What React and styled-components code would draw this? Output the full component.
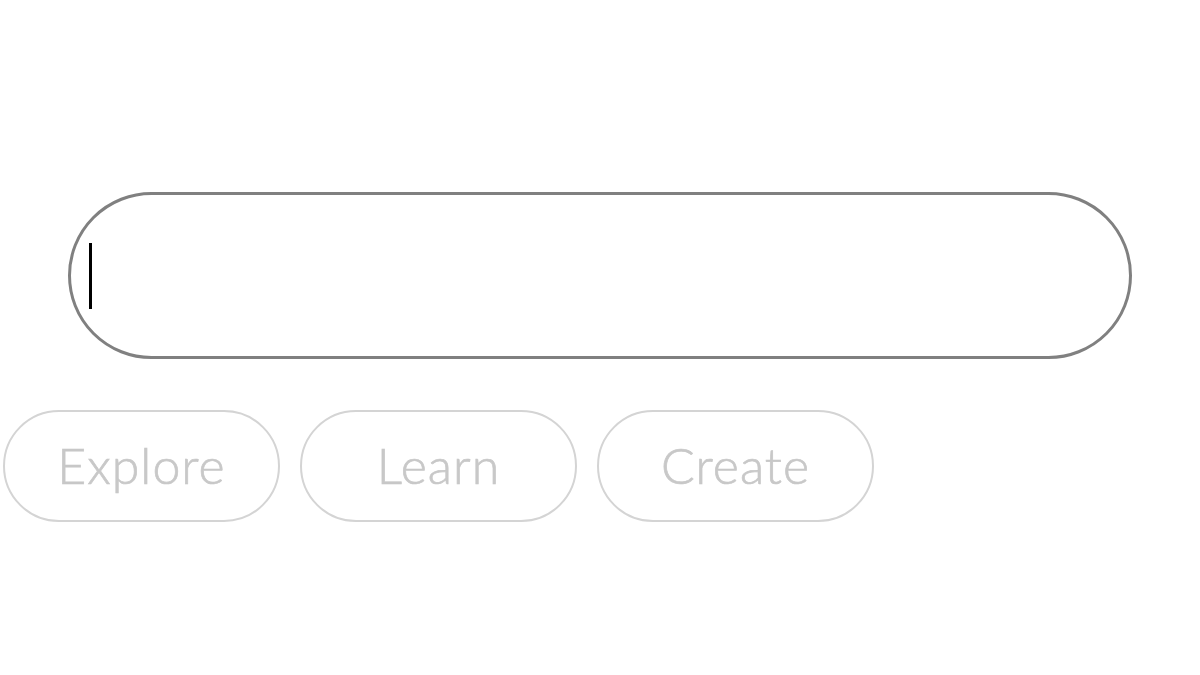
import React from "react";
import styled, { createGlobalStyle } from "styled-components";

const Global = createGlobalStyle`
  html, body { margin: 0; padding: 0; background: #ffffff; }
  body { font-family: Lato, "Open Sans", sans-serif; }
`;

const Page = styled.div`
  width: 1200px;
  height: 675px;
  display: flex;
  flex-direction: column;
  padding-top: 192px;
  box-sizing: border-box;
`;

const SearchBox = styled.div`
  margin: 0 68px;
  height: 167px;
  box-sizing: border-box;
  border: 3px solid #808080;
  border-radius: 84px;
  display: flex;
  align-items: center;
  padding-left: 18px;
`;

const Caret = styled.span`
  display: block;
  width: 3px;
  height: 66px;
  background: #000;
`;

const Chips = styled.div`
  display: flex;
  gap: 20px;
  margin-top: 51px;
  padding-left: 3px;
`;

const Chip = styled.div`
  width: 277px;
  height: 112px;
  box-sizing: border-box;
  border: 2.5px solid #d4d4d4;
  border-radius: 56px;
  display: flex;
  align-items: center;
  justify-content: center;
  font-family: Lato, sans-serif;
  font-weight: 300;
  font-size: 50px;
  letter-spacing: 1px;
  color: #c8c8c8;
  -webkit-text-stroke: 0.7px #c8c8c8;
  padding-bottom: 2px;
`;

export default function App() {
  return (
    <>
      <Global />
      <Page>
        <SearchBox>
          <Caret />
        </SearchBox>
        <Chips>
          <Chip>Explore</Chip>
          <Chip>Learn</Chip>
          <Chip>Create</Chip>
        </Chips>
      </Page>
    </>
  );
}
